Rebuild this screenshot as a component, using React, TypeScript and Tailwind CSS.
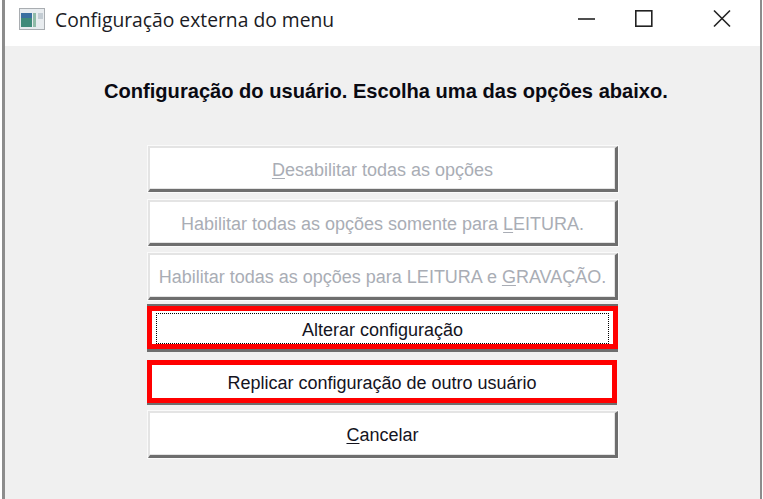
const grayBtn =
  'bg-white border-2 border-[#e4e4e4] border-r-[3px] border-b-[3px] border-r-[#6e6e6e] border-b-[#6e6e6e] pt-[3px] shadow-[0_0_0_1px_#fafafa,inset_-1px_-1px_0_#e4e4e4]'

const buttons = [
  { pre: '', key: 'D', post: 'esabilitar todas as opções', wrap: 'h-[46px]' },
  { pre: 'Habilitar todas as opções somente para ', key: 'L', post: 'EITURA.', wrap: 'h-[46px] mt-[8px]' },
  { pre: 'Habilitar todas as opções para LEITURA e ', key: 'G', post: 'RAVAÇÃO.', wrap: 'h-[47px] mt-[7px]' },
]

function Label({ pre, k, post }: { pre: string; k: string; post: string }) {
  return (
    <span>
      {pre}
      <span className="underline underline-offset-2">{k}</span>
      {post}
    </span>
  )
}

export default function App() {
  return (
    <div className="w-[763px] h-[499px] overflow-hidden bg-white pl-[2px] pr-[1px] font-['Liberation_Sans',sans-serif]">
      <div className="h-full bg-[#f0f0f0] border-l-[3px] border-r-[2px] border-[#8c8c8c] flex flex-col">
        {/* barra de titulo */}
        <div className="h-[46px] shrink-0 bg-white flex items-center pl-[14px] pb-[8px]">
          <svg width="26" height="22" viewBox="0 0 26 22" className="shrink-0">
            <rect x="0.5" y="0.5" width="25" height="21" fill="#e8ecef" stroke="#a9adb1" />
            <rect x="2" y="5" width="11" height="14" fill="#3f8a7a" />
            <rect x="2" y="5" width="11" height="5" fill="#3a6fa0" />
            <rect x="14" y="5" width="3" height="14" fill="#8fbba8" />
            <rect x="19" y="5" width="5" height="6" fill="#c3ccd3" />
          </svg>
          <span className="ml-[10px] mt-[3px] text-[19.3px] font-['Open_Sans',sans-serif] text-[#1b1b24]">
            Configuração externa do menu
          </span>
          <svg width="170" height="20" viewBox="0 0 170 20" className="ml-auto mr-[24px]" fill="none" stroke="#222" strokeWidth="1.6">
            <path d="M12 10h17" />
            <rect x="69.8" y="1.8" width="16" height="15.4" />
            <path d="M148 1.5l16 16M164 1.5l-16 16" />
          </svg>
        </div>

        {/* conteudo */}
        <div className="flex-1 flex flex-col items-start">
          <h1 className="mt-[34px] ml-[99px] h-[22px] leading-[22px] text-[20.1px] font-bold text-[#0a0a12] whitespace-nowrap">
            Configuração do usuário. Escolha uma das opções abaixo.
          </h1>

          <div className="mt-[44px] ml-[143px] w-[470px] flex flex-col items-start text-[18px]">
            {buttons.map((b) => (
              <button key={b.key} disabled className={`${b.wrap} w-full text-[#a9adb5] ${grayBtn}`}>
                <Label pre={b.pre} k={b.key} post={b.post} />
              </button>
            ))}

            <button className="h-[43px] mt-[6px] w-[471px] -ml-[1px] bg-white text-[#14141e] border-[5px] border-[#ff0000] shadow-[0_-2px_0_#6e6e6e,0_3px_0_#6e6e6e]">
              <span className="h-[31px] flex items-center justify-center pt-[3px] mx-[4px] mt-[2px] border border-dotted border-[#000]">
                Alterar configuração
              </span>
            </button>

            <button className="h-[43px] mt-[11px] w-[470px] -ml-[1px] pt-[3px] bg-white text-[#14141e] border-[5px] border-[#ff0000] shadow-[0_2px_0_#6e6e6e]">
              Replicar configuração de outro usuário
            </button>

            <button className={`h-[47px] mt-[8px] w-full text-[#14141e] ${grayBtn}`}>
              <Label pre="" k="C" post="ancelar" />
            </button>
          </div>
        </div>
      </div>
    </div>
  )
}
